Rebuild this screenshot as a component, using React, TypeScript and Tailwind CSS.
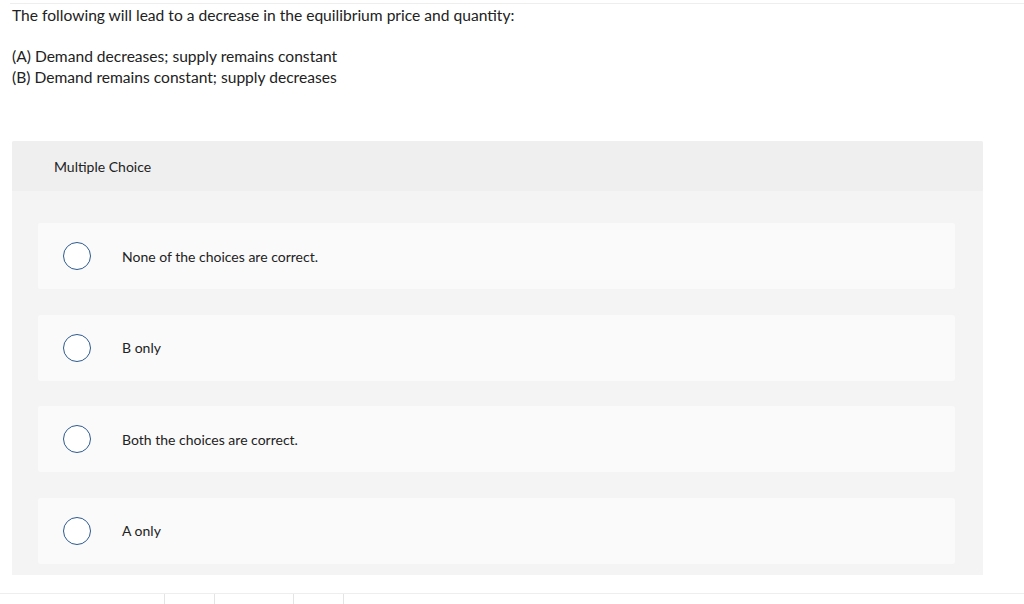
const choices = [
  'None of the choices are correct.',
  'B only',
  'Both the choices are correct.',
  'A only',
]

function Radio() {
  return (
    <span className="block w-[28px] h-[28px] rounded-full border border-[#2d5a8f] bg-white shrink-0" />
  )
}

export default function App() {
  return (
    <div className="w-[1024px] h-[604px] bg-white overflow-hidden text-[#222] font-['Lato',sans-serif]">
      <div className="h-[3px]" />
      <div className="border-t border-[#eeeeee] ml-[10px]" />
      <p className="pl-[12px] pt-[1px] text-[15.6px] leading-[21px]">
        The following will lead to a decrease in the equilibrium price and quantity:
      </p>
      <div className="pl-[12px] pt-[20px] text-[15.6px] leading-[21px]">
        <p>(A) Demand decreases; supply remains constant</p>
        <p>(B) Demand remains constant; supply decreases</p>
      </div>

      <div className="mt-[53px] ml-[12px] w-[971px] bg-[#f4f4f4] rounded-t-[2px]">
        <div className="h-[50px] bg-[#efefef] flex items-center pl-[42px] text-[14px] rounded-t-[2px]">
          Multiple Choice
        </div>
        <div className="flex flex-col gap-[25.67px] pt-[32px] pb-[11px] pl-[26px] pr-[28px]">
          {choices.map((c) => (
            <div key={c} className="h-[66px] bg-[#fafafa] rounded-[3px] flex items-center pl-[25px]">
              <Radio />
              <span className="ml-[31px] text-[14px]">{c}</span>
            </div>
          ))}
        </div>
      </div>

      <div className="mt-[18px] border-t border-[#eeeeee] flex h-[12px]">
        <span className="ml-[164px] border-l border-[#e4e4e4]" />
        <span className="ml-[49px] border-l border-[#e4e4e4]" />
        <span className="ml-[78px] border-l border-[#e4e4e4]" />
        <span className="ml-[49px] border-l border-[#e4e4e4]" />
      </div>
    </div>
  )
}
